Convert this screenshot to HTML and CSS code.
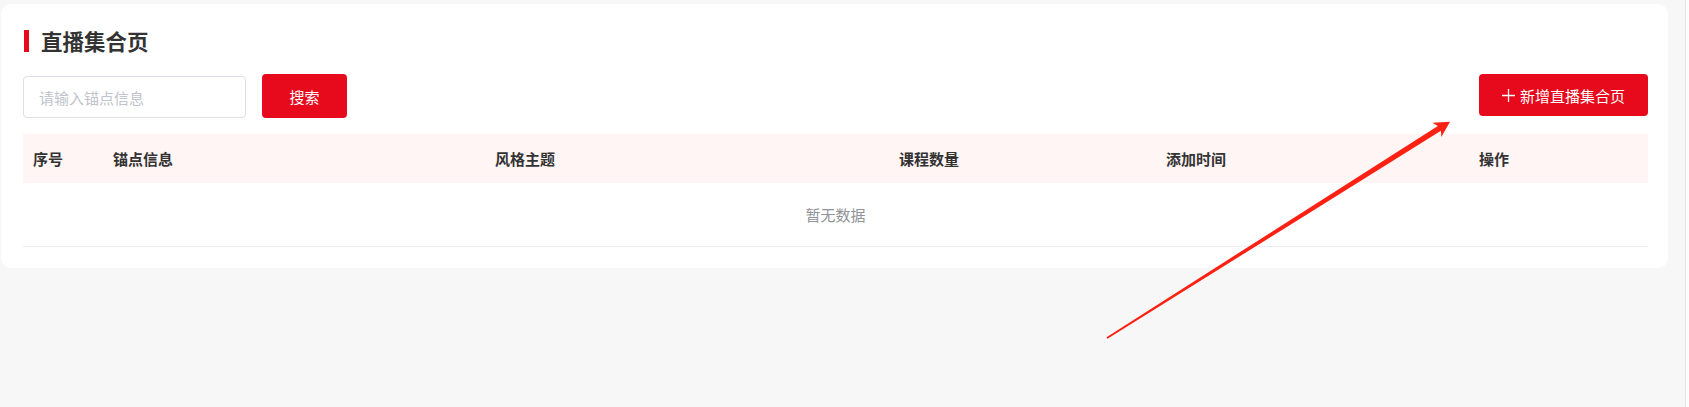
FILE: index.html
```
<!DOCTYPE html>
<html lang="zh-CN">
<head>
<meta charset="utf-8">
<title>直播集合页</title>
<link rel="stylesheet" href="styles.css">
</head>
<body>
<div class="page">
  <main class="main">
    <section class="card">
      <h1 class="title"><span class="title-bar"></span>直播集合页</h1>
      <div class="toolbar">
        <div class="search">
          <input class="input" type="text" placeholder="请输入锚点信息">
          <button class="btn btn-search">搜索</button>
        </div>
        <button class="btn btn-add">
          <svg class="plus" width="13" height="13" viewBox="0 0 13 13"><path d="M6.5 0v13M0 6.5h13" stroke="#fff" stroke-width="1.3" fill="none"/></svg>
          <span>新增直播集合页</span>
        </button>
      </div>
      <div class="table">
        <div class="thead">
          <div class="th">序号</div>
          <div class="th">锚点信息</div>
          <div class="th">风格主题</div>
          <div class="th">课程数量</div>
          <div class="th">添加时间</div>
          <div class="th">操作</div>
        </div>
        <div class="empty">暂无数据</div>
      </div>
    </section>
  </main>
  <div class="scrollbar"></div>
</div>
<svg class="arrow" width="1689" height="407" viewBox="0 0 1689 407">
  <g transform="translate(1107 338) rotate(-32.24)">
    <polygon points="0,-0.9 393,-2.9 390,-8.4 405.5,0 390,8.4 393,2.9 0,0.9" fill="#fc2112"/>
  </g>
</svg>
</body>
</html>
```
FILE: styles.css
```
* {
  box-sizing: border-box;
}

html, body {
  margin: 0;
  height: 100%;
}

body {
  background: #f7f7f7;
  font-family: "Noto Sans CJK SC", "Noto Sans", sans-serif;
  color: #333;
  position: relative;
  overflow: hidden;
}

.page {
  display: flex;
  height: 100%;
}

.main {
  flex: 1;
  min-width: 0;
}

.scrollbar {
  width: 4px;
  border-left: 1px solid #e4e4e4;
  background: #fdfdfd;
}

.card {
  margin: 4px 17px 0 1px;
  background: #fff;
  border-radius: 10px;
  padding: 26px 20px 21px 22px;
}

.title {
  margin: 0;
  display: flex;
  align-items: center;
  height: 22px;
  font-size: 21.5px;
  font-weight: 700;
  line-height: 22px;
  color: #333;
}

.title-bar {
  width: 5px;
  height: 22px;
  background: #e60a1c;
  margin-left: 1px;
  margin-right: 12px;
}

.toolbar {
  margin-top: 22px;
  display: flex;
  align-items: center;
  justify-content: space-between;
  height: 44px;
}

.search {
  display: flex;
  align-items: center;
  gap: 16px;
}

.input {
  width: 223px;
  height: 42px;
  border: 1px solid #dcdfe6;
  border-radius: 4px;
  padding: 0 15px;
  font-family: inherit;
  font-size: 15px;
  color: #606266;
  outline: none;
  margin-top: 2px;
}

.input::placeholder {
  color: #c0c4cc;
}

.btn {
  border: none;
  background: #e60a1c;
  color: #fff;
  font-family: inherit;
  font-size: 15px;
  border-radius: 4px;
  display: flex;
  align-items: center;
  justify-content: center;
  cursor: pointer;
}

.btn-search {
  width: 85px;
  height: 44px;
}

.btn-add {
  width: 169px;
  height: 42px;
  gap: 5px;
  margin-top: -2px;
}

.plus {
  display: block;
}

.table {
  margin-top: 16px;
}

.thead {
  display: grid;
  grid-template-columns: 80px 382px 404px 267px 313px 1fr;
  background: #fff5f5;
  height: 49px;
  align-items: center;
}

.th {
  padding-left: 10px;
  font-size: 15px;
  font-weight: 700;
  color: #333;
}

.empty {
  height: 64px;
  border-bottom: 1px solid #ebeef5;
  display: flex;
  align-items: center;
  justify-content: center;
  font-size: 15px;
  color: #909399;
}

.arrow {
  position: absolute;
  left: 0;
  top: 0;
  pointer-events: none;
}
```
